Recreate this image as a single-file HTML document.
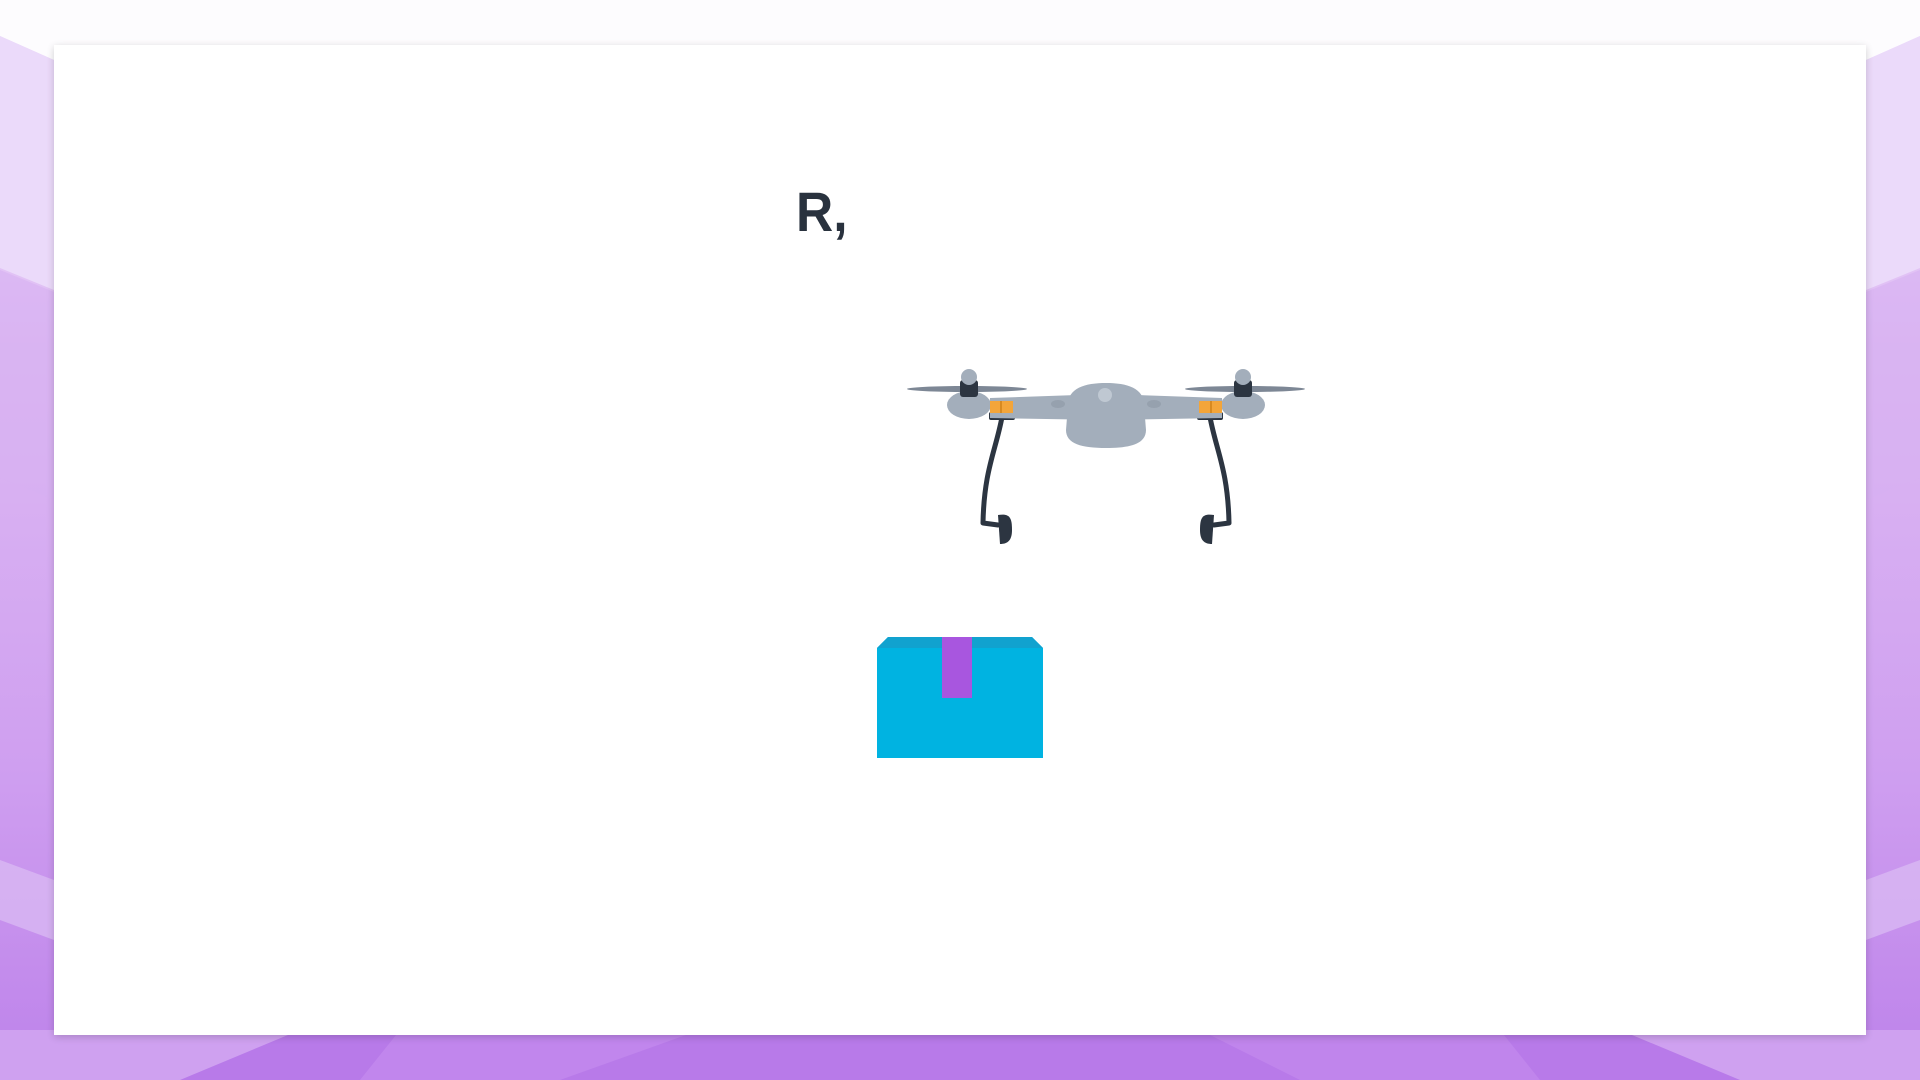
<!DOCTYPE html>
<html><head><meta charset="utf-8"><style>
html,body{margin:0;padding:0;width:1920px;height:1080px;overflow:hidden;background:#fff;}
svg{display:block}
</style></head><body>
<svg width="1920" height="1080" viewBox="0 0 1920 1080" xmlns="http://www.w3.org/2000/svg">
<defs>
<linearGradient id="bg" x1="0" y1="0" x2="0" y2="1">
<stop offset="0" stop-color="#efe0fb"/>
<stop offset="0.3" stop-color="#ddb9f3"/>
<stop offset="0.7" stop-color="#cf9ff0"/>
<stop offset="1" stop-color="#bd82ea"/>
</linearGradient>
<filter id="sh" x="-5%" y="-5%" width="110%" height="110%"><feGaussianBlur stdDeviation="4"/></filter>
</defs>
<rect width="1920" height="1080" fill="#fdfcfe"/>
<polygon points="0,36 54,60 54,1080 0,1080" fill="url(#bg)"/>
<polygon points="1920,36 1866,60 1866,1080 1920,1080" fill="url(#bg)"/>
<polygon points="0,270 54,292 54,500 0,478" fill="#d7b0f2" opacity="0.6"/>
<polygon points="1920,270 1866,292 1866,500 1920,478" fill="#d7b0f2" opacity="0.6"/>
<polygon points="0,36 54,60 54,290 0,268" fill="#ebdafa"/>
<polygon points="1920,36 1866,60 1866,290 1920,268" fill="#ebdafa"/>
<polygon points="0,860 54,880 54,940 0,920" fill="#dcbdf4" opacity="0.7"/>
<polygon points="1920,860 1866,880 1866,940 1920,920" fill="#dcbdf4" opacity="0.7"/>
<rect x="0" y="1030" width="1920" height="50" fill="#b87ae9"/>
<polygon points="0,1030 300,1030 180,1080 0,1080" fill="#cfa1f0"/>
<polygon points="1920,1030 1620,1030 1740,1080 1920,1080" fill="#cfa1f0"/>
<polygon points="400,1030 700,1030 560,1080 360,1080" fill="#c48cee" opacity="0.7"/>
<polygon points="1200,1030 1500,1030 1540,1080 1300,1080" fill="#c48cee" opacity="0.6"/>
<rect x="54" y="47" width="1812" height="990" fill="#000" opacity="0.18" filter="url(#sh)"/>
<rect x="54" y="45" width="1812" height="990" fill="#ffffff"/>
<text x="796" y="231" font-family="Liberation Sans, sans-serif" font-size="56" font-weight="bold" fill="#29323e" transform="translate(796,231) scale(0.92,1) translate(-796,-231)">R,</text>

<!-- box -->
<polygon points="888,637 1032,637 1043,648 1043,758 877,758 877,648" fill="#00b3e1"/>
<polygon points="888,637 1032,637 1043,648 877,648" fill="#11a2cf"/>
<rect x="942" y="637" width="30" height="61" fill="#a856df"/>

<!-- drone -->
<g id="half">
<path d="M1002,417 C996,450 984,470 983,523 L998,525" fill="none" stroke="#2c3541" stroke-width="5" stroke-linecap="round" stroke-linejoin="round"/>
<path d="M998,515 C1010,513 1012,518 1012,530 C1012,540 1008,544 1000,544 Z" fill="#2c3541"/>
<rect x="989" y="412" width="26" height="8" rx="2" fill="#2c3541"/>
<path d="M990,398 L1106,394 L1106,420 L990,418 Z" fill="#a3aebb"/>
<ellipse cx="969" cy="405" rx="22" ry="14" fill="#a3aebb"/>
<rect x="990" y="401" width="23" height="12" fill="#f3a53a"/>
<rect x="1000" y="401" width="2" height="12" fill="#d88a20"/>
<ellipse cx="967" cy="389" rx="60" ry="3" fill="#7d8795"/>
<rect x="960" y="380" width="18" height="17" rx="3" fill="#2c3541"/>
<circle cx="969" cy="377" r="8" fill="#a3aebb"/>
<ellipse cx="1058" cy="404" rx="7" ry="4" fill="#96a1ae"/>
</g>
<use href="#half" transform="translate(2212,0) scale(-1,1)"/>
<path d="M1068,405 C1068,388 1085,383 1106,383 C1127,383 1144,388 1144,405 L1146,430 C1146,444 1130,448 1106,448 C1082,448 1066,444 1066,430 Z" fill="#a3aebb"/>
<circle cx="1105" cy="395" r="7" fill="#bfc8d2"/>
</svg>
</body></html>
